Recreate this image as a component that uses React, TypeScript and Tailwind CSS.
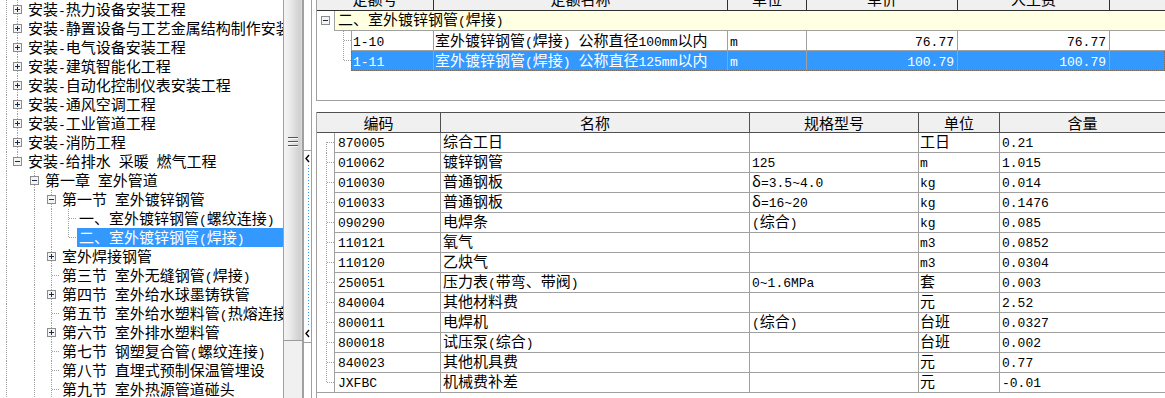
import React from "react";

const CJK_RE = /[\u0370-\u03FF\u2E80-\u9FFF\uFF00-\uFFEF]/;

function Mixed({ text }: { text: string }) {
  const runs: { t: string; c: boolean }[] = [];
  for (const ch of Array.from(text)) {
    const c = CJK_RE.test(ch);
    const last = runs[runs.length - 1];
    if (last && last.c === c) last.t += ch;
    else runs.push({ t: ch, c });
  }
  return (
    <>
      {runs.map((r, i) =>
        r.c ? (
          <span key={i} className="font-['Noto_Sans_CJK_SC',sans-serif] text-[15px]">
            {r.t}
          </span>
        ) : (
          <span key={i} className="font-['Liberation_Mono',monospace] text-[13px] whitespace-pre">
            {r.t}
          </span>
        )
      )}
    </>
  );
}

const DOT = "#a0a0a0";

function Box({ c, minus }: { c: number; minus: boolean }) {
  return (
    <g>
      <rect x={c - 3.5} y={5.5} width={8} height={8} fill="#f4f4f4" stroke="#8c8c8c" />
      <line x1={c - 2} x2={c + 3} y1={9.5} y2={9.5} stroke="#1c2a4a" />
      {!minus && <line x1={c + 0.5} x2={c + 0.5} y1={7} y2={12} stroke="#1c2a4a" />}
    </g>
  );
}

type V = [number, "f" | "t" | "b"];

function Guides({
  w,
  h,
  v,
  box,
  stub,
}: {
  w: number;
  h: number;
  v: V[];
  box?: { c: number; minus: boolean };
  stub?: [number, number];
}) {
  return (
    <svg width={w} height={h} className="block shrink-0" shapeRendering="crispEdges">
      {v.map(([x, k], i) => (
        <line
          key={i}
          x1={x + 0.5}
          x2={x + 0.5}
          y1={k === "b" ? 9 : 0}
          y2={k === "t" ? 10 : h}
          stroke={DOT}
          strokeDasharray="1 1"
        />
      ))}
      {stub && (
        <line x1={stub[0] + 0.5} x2={stub[1]} y1={9.5} y2={9.5} stroke={DOT} strokeDasharray="1 1" />
      )}
      {box && <Box c={box.c} minus={box.minus} />}
    </svg>
  );
}

type TRow = {
  level: 1 | 2 | 3 | 4;
  text: string;
  v: V[];
  box?: "plus" | "minus";
  stub?: boolean;
  selected?: boolean;
};

const C: Record<number, number> = { 1: 17, 2: 34, 3: 51, 4: 68 };
const W: Record<number, number> = { 1: 26, 2: 43, 3: 60, 4: 77 };

const L1: V[] = [
  [6, "f"],
  [17, "f"],
];
const L3: V[] = [
  [6, "f"],
  [34, "f"],
  [51, "f"],
];

const treeRows: TRow[] = [
  { level: 1, text: "安装-热力设备安装工程", v: L1, box: "plus" },
  { level: 1, text: "安装-静置设备与工艺金属结构制作安装工程", v: L1, box: "plus" },
  { level: 1, text: "安装-电气设备安装工程", v: L1, box: "plus" },
  { level: 1, text: "安装-建筑智能化工程", v: L1, box: "plus" },
  { level: 1, text: "安装-自动化控制仪表安装工程", v: L1, box: "plus" },
  { level: 1, text: "安装-通风空调工程", v: L1, box: "plus" },
  { level: 1, text: "安装-工业管道工程", v: L1, box: "plus" },
  { level: 1, text: "安装-消防工程", v: L1, box: "plus" },
  { level: 1, text: "安装-给排水 采暖 燃气工程", v: [[6, "f"], [17, "t"]], box: "minus" },
  { level: 2, text: "第一章 室外管道", v: [[6, "f"], [34, "f"]], box: "minus" },
  { level: 3, text: "第一节 室外镀锌钢管", v: L3, box: "minus" },
  { level: 4, text: "一、室外镀锌钢管(螺纹连接)", v: [...L3, [68, "f"]], stub: true },
  { level: 4, text: "二、室外镀锌钢管(焊接)", v: [...L3, [68, "t"]], stub: true, selected: true },
  { level: 3, text: "室外焊接钢管", v: L3, box: "plus" },
  { level: 3, text: "第三节 室外无缝钢管(焊接)", v: L3, stub: true },
  { level: 3, text: "第四节 室外给水球墨铸铁管", v: L3, box: "plus" },
  { level: 3, text: "第五节 室外给水塑料管(热熔连接)", v: L3, stub: true },
  { level: 3, text: "第六节 室外排水塑料管", v: L3, box: "plus" },
  { level: 3, text: "第七节 钢塑复合管(螺纹连接)", v: L3, stub: true },
  { level: 3, text: "第八节 直埋式预制保温管埋设", v: L3, stub: true },
  { level: 3, text: "第九节 室外热源管道碰头", v: L3, stub: true },
];

function Tree() {
  return (
    <div className="w-[283px] shrink-0 overflow-hidden bg-white">
      {treeRows.map((r, i) => {
        const c = C[r.level];
        return (
          <div key={i} className="flex h-[19px] whitespace-nowrap">
            <Guides
              w={W[r.level]}
              h={19}
              v={r.v}
              box={r.box ? { c, minus: r.box === "minus" } : undefined}
              stub={r.stub ? [c, c + 9] : undefined}
            />
            <div
              className={
                r.selected
                  ? "flex-1 bg-[#3399ff] px-[2px] leading-[18px] text-white"
                  : "flex-1 px-[2px] leading-[18px] text-black"
              }
            >
              <Mixed text={r.text} />
            </div>
          </div>
        );
      })}
    </div>
  );
}

function Scrollbar() {
  return (
    <div className="flex w-[20px] shrink-0 flex-col border-x border-[#a0a0a0] bg-[#f0f0f0]">
      <div className="flex h-[341px] shrink-0 flex-col items-center border-b border-[#9a9a9a] bg-[linear-gradient(to_right,#f4f4f4_0%,#ececec_30%,#d8d8d8_70%,#d0d0d0_88%,#dadada_100%)]">
        <svg width={10} height={11} className="mt-[137px] block" shapeRendering="crispEdges">
          {[0, 4, 8].map((y) => (
            <g key={y}>
              <line x1={0} x2={10} y1={y + 0.5} y2={y + 0.5} stroke="#555555" />
              <line x1={0} x2={10} y1={y + 1.5} y2={y + 1.5} stroke="#f8f8f8" />
            </g>
          ))}
        </svg>
      </div>
    </div>
  );
}

function Splitter() {
  return (
    <div className="flex w-[9px] shrink-0 flex-col border-x border-[#a0a0a0] bg-white">
      <div className="mt-[150px] h-[193px] border-y border-[#a0a0a0]">
        <svg width={7} height={191} className="block">
          <path d="M5 4 L2 7.5 L5 11" fill="none" stroke="#000" strokeWidth={1.4} />
          <line x1={4.5} x2={4.5} y1={14} y2={176} stroke="#3399ff" strokeDasharray="1 2" />
          <path d="M5 179 L2 182.5 L5 186" fill="none" stroke="#000" strokeWidth={1.4} />
        </svg>
      </div>
    </div>
  );
}

function TopTable() {
  const headers: [string, string][] = [
    ["定额号", "w-[117px]"],
    ["定额名称", "w-[294px]"],
    ["单位", "w-[79px]"],
    ["单价", "w-[151px]"],
    ["人工费", "w-[152px]"],
  ];
  const rows = [
    { code: "1-10", name: "室外镀锌钢管(焊接) 公称直径100mm以内", unit: "m", price: "76.77", labor: "76.77" },
    { code: "1-11", name: "室外镀锌钢管(焊接) 公称直径125mm以内", unit: "m", price: "100.79", labor: "100.79" },
  ];
  return (
    <div className="h-[101px] shrink-0 overflow-hidden border-b border-l border-[#a0a0a0] bg-white">
      <div className="-mt-[10px] flex h-[21px] border-b border-[#303030] bg-[#f0f0f0]">
        {headers.map(([t, w]) => (
          <div key={t} className={`${w} shrink-0 border-r border-[#303030] text-center leading-[17px]`}>
            <Mixed text={t} />
          </div>
        ))}
        <div className="flex-1" />
      </div>
      <div className="flex h-[20px]">
        <div className="w-[17px] shrink-0">
          <Guides w={17} h={20} v={[]} box={{ c: 8, minus: true }} />
        </div>
        <div className="flex-1 border-b border-l border-[#a0a0a0] bg-[#ffffe1] pl-[3px] leading-[16px] whitespace-nowrap">
          <Mixed text="二、室外镀锌钢管(焊接)" />
        </div>
      </div>
      {rows.map((r, i) => {
        const sel = i === 1;
        return (
          <div key={r.code} className="flex h-[20px]">
            <div className="w-[34px] shrink-0">
              <Guides w={34} h={20} v={[[26, sel ? "t" : "f"]]} stub={[26, 34]} />
            </div>
            <div
              className={
                sel
                  ? "flex flex-1 border border-t-0 border-dotted border-[#7a6a5a] bg-[#3399ff] text-white whitespace-nowrap leading-[18px]"
                  : "flex flex-1 border-b border-l border-[#a0a0a0] text-black whitespace-nowrap leading-[18px]"
              }
            >
              <div className="w-[82px] shrink-0 border-r border-[#a0a0a0] pl-[1px]">
                <Mixed text={r.code} />
              </div>
              <div className="w-[294px] shrink-0 overflow-hidden border-r border-[#a0a0a0] pl-[1px]">
                <Mixed text={r.name} />
              </div>
              <div className="w-[79px] shrink-0 border-r border-[#a0a0a0] pl-[2px]">
                <Mixed text={r.unit} />
              </div>
              <div className="w-[151px] shrink-0 border-r border-[#a0a0a0] pr-[3px] text-right">
                <Mixed text={r.price} />
              </div>
              <div className="w-[152px] shrink-0 border-r border-[#a0a0a0] pr-[3px] text-right">
                <Mixed text={r.labor} />
              </div>
              <div className="flex-1" />
            </div>
          </div>
        );
      })}
    </div>
  );
}

const materials: string[][] = [
  ["870005", "综合工日", "", "工日", "0.21"],
  ["010062", "镀锌钢管", "125", "m", "1.015"],
  ["010030", "普通钢板", "δ=3.5~4.0", "kg", "0.014"],
  ["010033", "普通钢板", "δ=16~20", "kg", "0.1476"],
  ["090290", "电焊条", "(综合)", "kg", "0.085"],
  ["110121", "氧气", "", "m3", "0.0852"],
  ["110120", "乙炔气", "", "m3", "0.0304"],
  ["250051", "压力表(带弯、带阀)", "0~1.6MPa", "套", "0.003"],
  ["840004", "其他材料费", "", "元", "2.52"],
  ["800011", "电焊机", "(综合)", "台班", "0.0327"],
  ["800018", "试压泵(综合)", "", "台班", "0.002"],
  ["840023", "其他机具费", "", "元", "0.77"],
  ["JXFBC", "机械费补差", "", "元", "-0.01"],
];

function BottomTable() {
  return (
    <div className="mt-[11px] flex flex-1 flex-col border-l border-[#a0a0a0] bg-white">
      <div className="flex h-[21px] shrink-0 border-y border-[#505050] bg-[#f0f0f0] text-center leading-[19px]">
        <div className="w-[124px] shrink-0 border-r border-[#505050]">
          <Mixed text="编码" />
        </div>
        <div className="w-[309px] shrink-0 border-r border-[#505050]">
          <Mixed text="名称" />
        </div>
        <div className="w-[169px] shrink-0 border-r border-[#505050]">
          <Mixed text="规格型号" />
        </div>
        <div className="w-[81px] shrink-0 border-r border-[#505050]">
          <Mixed text="单位" />
        </div>
        <div className="flex-1">
          <Mixed text="含量" />
        </div>
      </div>
      {materials.map((m, i) => {
        const first = i === 0;
        const last = i === materials.length - 1;
        return (
          <div key={m[0]} className="flex h-[20px] shrink-0">
            <div className={last ? "w-[17px] shrink-0 border-b border-[#a0a0a0]" : "w-[17px] shrink-0"}>
              <Guides w={17} h={last ? 19 : 20} v={[[9, first ? "b" : last ? "t" : "f"]]} stub={[9, 17]} />
            </div>
            <div className="flex flex-1 border-b border-l border-[#a0a0a0] whitespace-nowrap leading-[15px] text-black">
              <div className="w-[106px] shrink-0 border-r border-[#a0a0a0] pl-[3px]">
                <Mixed text={m[0]} />
              </div>
              <div className="w-[309px] shrink-0 border-r border-[#a0a0a0] pl-[2px]">
                <Mixed text={m[1]} />
              </div>
              <div className="w-[169px] shrink-0 border-r border-[#a0a0a0] pl-[2px]">
                <Mixed text={m[2]} />
              </div>
              <div className="w-[81px] shrink-0 border-r border-[#a0a0a0] pl-[1px]">
                <Mixed text={m[3]} />
              </div>
              <div className="flex-1 pl-[2px]">
                <Mixed text={m[4]} />
              </div>
            </div>
          </div>
        );
      })}
    </div>
  );
}

export default function App() {
  return (
    <div className="flex h-[398px] w-[1165px] overflow-hidden bg-white font-['Noto_Sans_CJK_SC',sans-serif] text-[15px] text-black">
      <Tree />
      <Scrollbar />
      <Splitter />
      <div className="flex min-w-0 flex-1 flex-col pl-[4px]">
        <TopTable />
        <BottomTable />
      </div>
    </div>
  );
}
